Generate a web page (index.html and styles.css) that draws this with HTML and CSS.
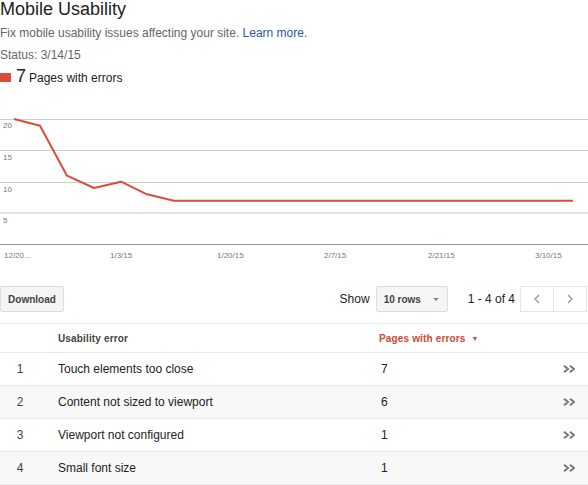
FILE: index.html
```html
<!DOCTYPE html>
<html>
<head>
<meta charset="utf-8">
<link rel="stylesheet" href="styles.css">
</head>
<body>
<div class="page">
  <h1 class="title">Mobile Usability</h1>
  <p class="desc">Fix mobile usability issues affecting your site. <a class="link" href="#">Learn more.</a></p>
  <p class="status">Status: 3/14/15</p>
  <div class="legend"><span class="swatch"></span><span class="count">7</span><span class="legend-label">Pages with errors</span></div>

  <svg class="chart" width="588" height="170" viewBox="0 0 588 170">
    <line x1="0" y1="19.5" x2="588" y2="19.5" class="grid"/>
    <line x1="0" y1="50.5" x2="588" y2="50.5" class="grid"/>
    <line x1="0" y1="82.5" x2="588" y2="82.5" class="grid"/>
    <line x1="0" y1="113" x2="588" y2="113" class="grid grid-soft"/>
    <line x1="0" y1="144.5" x2="588" y2="144.5" class="axis"/>
    <text x="3" y="28" class="lbl">20</text>
    <text x="3" y="60" class="lbl">15</text>
    <text x="3" y="91.5" class="lbl">10</text>
    <text x="3" y="122.5" class="lbl">5</text>
    <polyline class="series" points="14,19 40,25.7 67,75.7 94,88 121,81.7 147,94.3 174,100.7 573,100.7"/>
    <text x="4" y="158" class="lbl">12/20...</text>
    <text x="110" y="158" class="lbl">1/3/15</text>
    <text x="217" y="158" class="lbl">1/20/15</text>
    <text x="324" y="158" class="lbl">2/7/15</text>
    <text x="428" y="158" class="lbl">2/21/15</text>
    <text x="535" y="158" class="lbl">3/10/15</text>
  </svg>

  <div class="toolbar">
    <button class="btn">Download</button>
    <div class="pager">
      <span class="show">Show</span>
      <div class="select"><span>10 rows</span><span class="caret"></span></div>
      <span class="range">1 - 4 of 4</span>
      <div class="navs">
        <span class="nav"><svg width="6" height="10" viewBox="0 0 6 10"><path d="M5 1 L1 5 L5 9" class="navpath"/></svg></span>
        <span class="nav"><svg width="6" height="10" viewBox="0 0 6 10"><path d="M1 1 L5 5 L1 9" class="navpath"/></svg></span>
      </div>
    </div>
  </div>

  <div class="table">
    <div class="row head">
      <span></span>
      <span class="th name-h">Usability error</span>
      <span class="th sorted">Pages with errors <span class="sort">&#9660;</span></span>
      <span></span>
    </div>
    <div class="row">
      <span class="num">1</span><span class="name">Touch elements too close</span><span class="val">7</span>
      <span class="go"><svg width="12" height="8" viewBox="0 0 12 8"><path d="M1 0.8 L5 4 L1 7.2 M7 0.8 L11 4 L7 7.2" class="gopath"/></svg></span>
    </div>
    <div class="row alt">
      <span class="num">2</span><span class="name">Content not sized to viewport</span><span class="val">6</span>
      <span class="go"><svg width="12" height="8" viewBox="0 0 12 8"><path d="M1 0.8 L5 4 L1 7.2 M7 0.8 L11 4 L7 7.2" class="gopath"/></svg></span>
    </div>
    <div class="row">
      <span class="num">3</span><span class="name">Viewport not configured</span><span class="val">1</span>
      <span class="go"><svg width="12" height="8" viewBox="0 0 12 8"><path d="M1 0.8 L5 4 L1 7.2 M7 0.8 L11 4 L7 7.2" class="gopath"/></svg></span>
    </div>
    <div class="row alt">
      <span class="num">4</span><span class="name">Small font size</span><span class="val">1</span>
      <span class="go"><svg width="12" height="8" viewBox="0 0 12 8"><path d="M1 0.8 L5 4 L1 7.2 M7 0.8 L11 4 L7 7.2" class="gopath"/></svg></span>
    </div>
  </div>
</div>
</body>
</html>
```
FILE: styles.css
```css
html, body {
  margin: 0;
  padding: 0;
  background: #fff;
}
body {
  font-family: "Liberation Sans", Arial, sans-serif;
  color: #222;
  overflow: hidden;
}
.page {
  width: 588px;
}
.title {
  margin: 0;
  font-size: 18px;
  line-height: 18px;
  font-weight: normal;
  color: #222;
}
.desc {
  margin: 7px 0 0;
  font-size: 12px;
  line-height: 16px;
  color: #666;
}
.link {
  color: #2a56a8;
  text-decoration: none;
}
.status {
  margin: 6px 0 0;
  font-size: 12px;
  line-height: 16px;
  color: #666;
}
.legend {
  margin-top: 3px;
  height: 20px;
  line-height: 20px;
  font-size: 12px;
  color: #222;
}
.swatch {
  display: inline-block;
  width: 11px;
  height: 9px;
  background: #dd4b39;
  vertical-align: baseline;
}
.count {
  font-size: 18px;
  margin-left: 5px;
  margin-right: 3px;
}
.chart {
  display: block;
  margin-top: 14px;
}
.grid {
  stroke: #cfcfcf;
  stroke-width: 1;
}
.grid-soft {
  stroke: #e2e2e2;
  stroke-width: 2;
}
.axis {
  stroke: #999;
  stroke-width: 1;
}
.lbl {
  font-family: "Liberation Sans", Arial, sans-serif;
  font-size: 8px;
  fill: #777;
}
.series {
  fill: none;
  stroke: #dd4b39;
  stroke-width: 2;
  stroke-linejoin: round;
}
.toolbar {
  margin-top: 16px;
  height: 26px;
  display: flex;
  justify-content: space-between;
  align-items: center;
  padding-right: 1px;
}
.btn {
  box-sizing: border-box;
  width: 64px;
  height: 26px;
  margin: 0;
  padding: 0;
  background: #f5f5f5;
  border: 1px solid #dcdcdc;
  border-radius: 2px;
  font-family: "Liberation Sans", Arial, sans-serif;
  font-size: 10px;
  font-weight: bold;
  color: #444;
}
.pager {
  display: flex;
  align-items: center;
  height: 26px;
}
.show {
  font-size: 12px;
  color: #222;
  margin-right: 6px;
}
.select {
  box-sizing: border-box;
  width: 72px;
  height: 26px;
  background: #f5f5f5;
  border: 1px solid #dcdcdc;
  border-radius: 2px;
  display: flex;
  align-items: center;
  justify-content: space-between;
  padding: 0 8px 0 7px;
  font-size: 10px;
  font-weight: bold;
  color: #444;
}
.caret {
  width: 0;
  height: 0;
  border-left: 3px solid transparent;
  border-right: 3px solid transparent;
  border-top: 3px solid #888;
}
.range {
  margin-left: 20px;
  font-size: 12px;
  color: #222;
}
.navs {
  margin-left: 5px;
  display: flex;
  height: 26px;
  border: 1px solid #e6e6e6;
  box-sizing: border-box;
}
.nav {
  width: 32px;
  display: flex;
  align-items: center;
  justify-content: center;
}
.nav + .nav {
  border-left: 1px solid #e6e6e6;
}
.navpath {
  fill: none;
  stroke: #999;
  stroke-width: 1.4;
}
.table {
  margin-top: 11px;
  border-top: 1px solid #e8e8e8;
}
.row {
  display: grid;
  grid-template-columns: 40px 339px 176px 33px;
  align-items: center;
  height: 32px;
  border-bottom: 1px solid #e8e8e8;
  font-size: 12px;
}
.row.head {
  height: 28px;
}
.row.alt {
  background: #f8f8f8;
}
.th {
  font-size: 10px;
  font-weight: bold;
  color: #444;
  letter-spacing: 0.15px;
}
.name-h {
  padding-left: 18px;
}
.th.sorted {
  color: #d14836;
}
.sort {
  font-size: 7px;
  margin-left: 3px;
  vertical-align: 1px;
}
.num {
  text-align: center;
  color: #444;
}
.name {
  padding-left: 18px;
  color: #222;
}
.val {
  padding-left: 2px;
  color: #222;
}
.go {
  display: flex;
  align-items: center;
  padding-left: 8px;
}
.gopath {
  fill: none;
  stroke: #777;
  stroke-width: 2;
}
```
